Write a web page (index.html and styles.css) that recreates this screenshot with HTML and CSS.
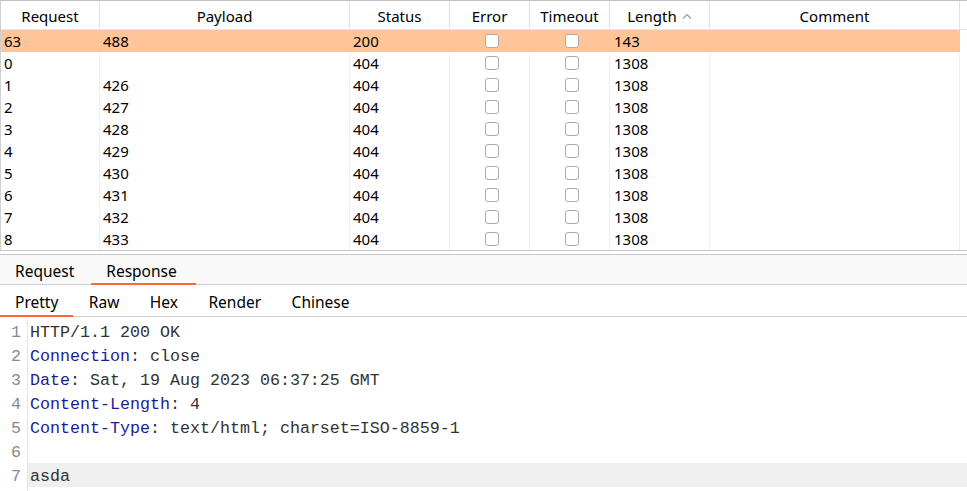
FILE: index.html
```html
<!DOCTYPE html>
<html>
<head>
<meta charset="utf-8">
<link rel="stylesheet" href="styles.css">
</head>
<body>
<div class="results">
  <div class="row head">
    <div class="c c1">Request</div>
    <div class="c c2">Payload</div>
    <div class="c c3">Status</div>
    <div class="c c4">Error</div>
    <div class="c c5">Timeout</div>
    <div class="c c6">Length<span class="sort"><svg width="10" height="6" viewBox="0 0 10 6"><path d="M1 5.5 L5 1.5 L9 5.5" fill="none" stroke="#9a9a9a" stroke-width="1.1"/></svg></span></div>
    <div class="c c7">Comment</div>
  </div>
  <div class="row sel">
    <div class="c c1">63</div><div class="c c2">488</div><div class="c c3">200</div>
    <div class="c c4"><span class="cb"></span></div><div class="c c5"><span class="cb"></span></div>
    <div class="c c6">143</div><div class="c c7"></div>
  </div>
  <div class="row">
    <div class="c c1">0</div><div class="c c2"></div><div class="c c3">404</div>
    <div class="c c4"><span class="cb"></span></div><div class="c c5"><span class="cb"></span></div>
    <div class="c c6">1308</div><div class="c c7"></div>
  </div>
  <div class="row">
    <div class="c c1">1</div><div class="c c2">426</div><div class="c c3">404</div>
    <div class="c c4"><span class="cb"></span></div><div class="c c5"><span class="cb"></span></div>
    <div class="c c6">1308</div><div class="c c7"></div>
  </div>
  <div class="row">
    <div class="c c1">2</div><div class="c c2">427</div><div class="c c3">404</div>
    <div class="c c4"><span class="cb"></span></div><div class="c c5"><span class="cb"></span></div>
    <div class="c c6">1308</div><div class="c c7"></div>
  </div>
  <div class="row">
    <div class="c c1">3</div><div class="c c2">428</div><div class="c c3">404</div>
    <div class="c c4"><span class="cb"></span></div><div class="c c5"><span class="cb"></span></div>
    <div class="c c6">1308</div><div class="c c7"></div>
  </div>
  <div class="row">
    <div class="c c1">4</div><div class="c c2">429</div><div class="c c3">404</div>
    <div class="c c4"><span class="cb"></span></div><div class="c c5"><span class="cb"></span></div>
    <div class="c c6">1308</div><div class="c c7"></div>
  </div>
  <div class="row">
    <div class="c c1">5</div><div class="c c2">430</div><div class="c c3">404</div>
    <div class="c c4"><span class="cb"></span></div><div class="c c5"><span class="cb"></span></div>
    <div class="c c6">1308</div><div class="c c7"></div>
  </div>
  <div class="row">
    <div class="c c1">6</div><div class="c c2">431</div><div class="c c3">404</div>
    <div class="c c4"><span class="cb"></span></div><div class="c c5"><span class="cb"></span></div>
    <div class="c c6">1308</div><div class="c c7"></div>
  </div>
  <div class="row">
    <div class="c c1">7</div><div class="c c2">432</div><div class="c c3">404</div>
    <div class="c c4"><span class="cb"></span></div><div class="c c5"><span class="cb"></span></div>
    <div class="c c6">1308</div><div class="c c7"></div>
  </div>
  <div class="row">
    <div class="c c1">8</div><div class="c c2">433</div><div class="c c3">404</div>
    <div class="c c4"><span class="cb"></span></div><div class="c c5"><span class="cb"></span></div>
    <div class="c c6">1308</div><div class="c c7"></div>
  </div>
</div>
<div class="split"></div>
<div class="tabs main">
  <div class="tab">Request</div>
  <div class="tab active">Response</div>
</div>
<div class="tabs sub">
  <div class="tab active">Pretty</div>
  <div class="tab">Raw</div>
  <div class="tab">Hex</div>
  <div class="tab">Render</div>
  <div class="tab">Chinese</div>
</div>
<div class="editor">
  <div class="line"><span class="ln">1</span><span class="code">HTTP/1.1 200 OK</span></div>
  <div class="line"><span class="ln">2</span><span class="code"><span class="k">Connection</span>: close</span></div>
  <div class="line"><span class="ln">3</span><span class="code"><span class="k">Date</span>: Sat, 19 Aug 2023 06:37:25 GMT</span></div>
  <div class="line"><span class="ln">4</span><span class="code"><span class="k">Content-Length</span>: 4</span></div>
  <div class="line"><span class="ln">5</span><span class="code"><span class="k">Content-Type</span>: text/html; charset=ISO-8859-1</span></div>
  <div class="line"><span class="ln">6</span><span class="code"></span></div>
  <div class="line cur"><span class="ln">7</span><span class="code">asda</span></div>
  <div class="line"><span class="ln"></span><span class="code"></span></div>
</div>
</body>
</html>
```

FILE: styles.css
```css
* { box-sizing: border-box; }
html, body { margin: 0; padding: 0; background: #fff; }
body {
  font-family: "Noto Sans", "Open Sans", sans-serif;
  font-size: 15px;
  color: #000;
  width: 967px;
  height: 491px;
  overflow: hidden;
}
.results {
  border-top: 1px solid #c2c2c2;
  border-left: 1px solid #d0d0d0;
  height: 250px;
}
.row {
  display: grid;
  grid-template-columns: 99px 250px 100px 80px 80px 100px 250px;
  height: 22px;
  line-height: 22px;
}
.row.head {
  height: 29px;
  line-height: 30px;
  border-bottom: 1px solid #e6e6e6;
}
.c {
  border-right: 1px solid #f1f1f1;
  padding-left: 3px;
  white-space: nowrap;
  overflow: hidden;
}
.head .c {
  border-right: 1px solid #e2e2e2;
  text-align: center;
  padding-left: 0;
}
.sel .c { background: #ffc599; border-right-color: #ffc599; }
.c4, .c5 {
  display: flex;
  align-items: center;
  justify-content: center;
}
.row:not(.head) .c4, .row:not(.head) .c5 { padding-left: 4px; }
.head .c4, .head .c5 { display: block; }
.c6 { padding-left: 4px; }
.cb {
  width: 14px;
  height: 14px;
  border: 1px solid #ababab;
  border-radius: 3px;
  background: #fff;
}
.sort {
  display: inline-block;
  margin-left: 5px;
  vertical-align: 3px;
}
.sort svg { display: block; }
.split {
  height: 5px;
  border-top: 1px solid #c9c6c9;
  border-bottom: 1px solid #c9c6c9;
  background: #fff;
}
.tabs {
  display: flex;
  border-bottom: 1px solid #cfcfcf;
  font-size: 15.5px;
}
.tabs.main {
  height: 30px;
  background: #f9f9f9;
}
.tabs.sub {
  height: 32px;
  background: #fff;
}
.tab {
  display: flex;
  align-items: center;
  padding: 2px 15px 0 15px;
  color: #000;
  position: relative;
}
.tabs.main .tab { padding: 2px 17px 0 15px; }
.tabs.main .tab.active { padding: 2px 19px 0 15px; }
.tabs.sub .tab { padding: 2px 15px 0 15.5px; }
.tabs.sub .tab:first-child { padding: 2px 15px 0 15px; }
.tab.active::after {
  content: "";
  position: absolute;
  left: 0;
  right: 0;
  bottom: -1px;
  height: 2px;
  background: #ff6633;
}
.editor {
  padding-top: 2px;
  font-family: "Liberation Mono", "DejaVu Sans Mono", monospace;
  font-size: 16.67px;
  color: #333;
}
.line {
  display: flex;
  height: 24px;
  line-height: 28px;
}
.ln {
  width: 28px;
  flex: none;
  text-align: right;
  padding-right: 6px;
  color: #8a8a8a;
  border-right: 1px solid #e6e6e6;
}
.code {
  flex: 1;
  padding-left: 2px;
  white-space: pre;
}
.cur .code { background: #efefef; }
.k { color: #1c1c96; }
```
